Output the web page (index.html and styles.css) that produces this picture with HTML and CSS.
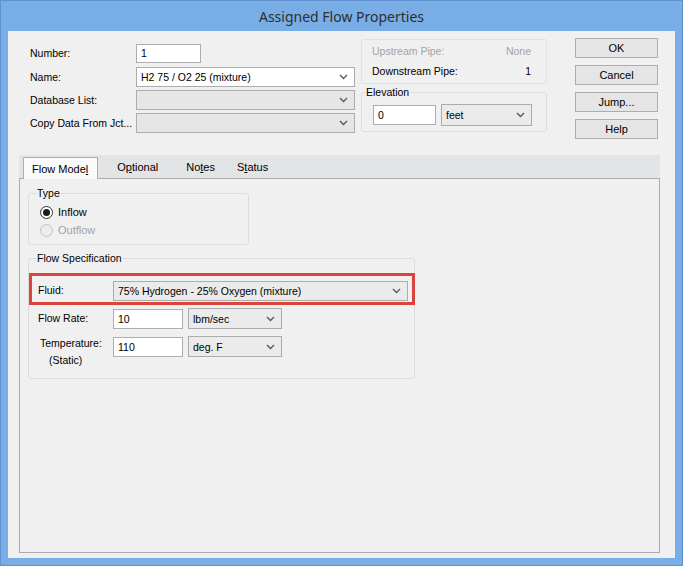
FILE: index.html
```html
<!DOCTYPE html>
<html lang="en">
<head>
  <meta charset="UTF-8" />
  <title>Assigned Flow Properties</title>
  <link rel="stylesheet" href="styles.css">
</head>
<body>
  <div class="window">
    <div class="titlebar">Assigned Flow Properties</div>

    <div class="client">
      <div class="top">
        <!-- Junction identity -->
        <div class="junction-form">
          <div class="row row-number">
            <label>Number:</label>
            <div class="textbox w-number">1</div>
          </div>
          <div class="row">
            <label>Name:</label>
            <div class="combo edit w-name">
              <span>H2 75 / O2 25 (mixture)</span>
              <svg class="arrow" width="9" height="6" viewBox="0 0 9 6"><polyline points="1,1 4.5,4.5 8,1" /></svg>
            </div>
          </div>
          <div class="row">
            <label>Database List:</label>
            <div class="combo w-name">
              <span></span>
              <svg class="arrow" width="9" height="6" viewBox="0 0 9 6"><polyline points="1,1 4.5,4.5 8,1" /></svg>
            </div>
          </div>
          <div class="row">
            <label>Copy Data From Jct...</label>
            <div class="combo w-name">
              <span></span>
              <svg class="arrow" width="9" height="6" viewBox="0 0 9 6"><polyline points="1,1 4.5,4.5 8,1" /></svg>
            </div>
          </div>
        </div>

        <!-- Connected pipes + elevation -->
        <div class="middle">
          <div class="pipes">
            <div class="pipe-row disabled"><span>Upstream Pipe:</span><span>None</span></div>
            <div class="pipe-row"><span>Downstream Pipe:</span><span>1</span></div>
          </div>
          <fieldset class="group elevation">
            <legend>Elevation</legend>
            <div class="field-line">
              <div class="textbox w-elev">0</div>
              <div class="combo list w-feet">
                <span>feet</span>
                <svg class="arrow" width="9" height="6" viewBox="0 0 9 6"><polyline points="1,1 4.5,4.5 8,1" /></svg>
              </div>
            </div>
          </fieldset>
        </div>

        <div class="buttons">
          <button>OK</button>
          <button>Cancel</button>
          <button>Jump...</button>
          <button>Help</button>
        </div>
      </div>

      <!-- Tabs -->
      <div class="tabs">
        <div class="tab-strip">
          <div class="tab selected">Flow Mode<u>l</u></div>
          <div class="tab t-optional">O<u>p</u>tional</div>
          <div class="tab t-notes">No<u>t</u>es</div>
          <div class="tab t-status">S<u>t</u>atus</div>
        </div>
        <div class="tab-panel">
          <fieldset class="group type-group">
            <legend>Type</legend>
            <div class="radios">
              <div class="radio-row">
                <span class="radio checked"></span><span>Inflow</span>
              </div>
              <div class="radio-row disabled">
                <span class="radio"></span><span>Outflow</span>
              </div>
            </div>
          </fieldset>

          <fieldset class="group spec-group">
            <legend>Flow Specification</legend>
            <div class="highlight">
              <label>Fluid:</label>
              <div class="combo list w-fluid">
                <span>75% Hydrogen - 25% Oxygen (mixture)</span>
                <svg class="arrow" width="9" height="6" viewBox="0 0 9 6"><polyline points="1,1 4.5,4.5 8,1" /></svg>
              </div>
            </div>
            <div class="spec-row">
              <label>Flow Rate:</label>
              <div class="textbox w-value">10</div>
              <div class="combo list w-unit">
                <span>lbm/sec</span>
                <svg class="arrow" width="9" height="6" viewBox="0 0 9 6"><polyline points="1,1 4.5,4.5 8,1" /></svg>
              </div>
            </div>
            <div class="spec-row">
              <label class="two-line">Temperature:<br><span class="sub">(Static)</span></label>
              <div class="textbox w-value">110</div>
              <div class="combo list w-unit">
                <span>deg. F</span>
                <svg class="arrow" width="9" height="6" viewBox="0 0 9 6"><polyline points="1,1 4.5,4.5 8,1" /></svg>
              </div>
            </div>
          </fieldset>
        </div>
      </div>
    </div>
  </div>
</body>
</html>
```

FILE: styles.css
```css
body {
  margin: 0;
  font-family: "Liberation Sans", Arial, sans-serif;
  font-size: 10.5px;
  color: #000;
}
.window {
  width: 683px;
  height: 566px;
  box-sizing: border-box;
  border: 1px solid #5d92cf;
  background-color: #78ade6;
  display: flex;
  flex-direction: column;
}
.titlebar {
  height: 30px;
  display: flex;
  align-items: center;
  justify-content: center;
  font-family: "Noto Sans", "Open Sans", sans-serif;
  font-size: 14px;
  color: #2f2f2f;
}
.client {
  margin: 0 7px 7px 7px;
  flex: 1;
  background-color: #f0f0f0;
}
.top {
  display: flex;
  height: 124px;
}

/* form controls */
.textbox,
.combo {
  box-sizing: border-box;
  height: 20px;
  border: 1px solid #abadb3;
  background: #fff;
  display: flex;
  align-items: center;
  padding: 0 4px;
  white-space: nowrap;
}
.textbox {
  height: 19px;
}
.combo {
  border-color: #acacac;
  background: #e6e6e6;
  padding-right: 6px;
}
.combo.edit {
  background: #fff;
}
.combo.list {
  background: #ebebeb;
}
.combo span {
  flex: 1;
  overflow: hidden;
}
.arrow polyline {
  fill: none;
  stroke: #5a5a5a;
  stroke-width: 1.4;
}
.group {
  margin: 0;
  padding: 0;
  border: 1px solid #dcdcdc;
  border-radius: 3px;
  min-width: 0;
}
.group legend {
  margin-left: 7px;
  padding: 0 1px;
  line-height: 13px;
}

/* top left form */
.junction-form {
  width: 325px;
  padding: 12px 0 0 22px;
  display: flex;
  flex-direction: column;
  gap: 3px;
}
.row {
  display: flex;
  align-items: center;
  height: 20px;
}
.row label {
  width: 106px;
  flex: none;
}
.row-number {
  margin-bottom: 1px;
}
.w-number { width: 65px; }
.w-name { width: 219px; }

/* middle column */
.middle {
  width: 186px;
  margin-left: 6px;
  padding-top: 8px;
}
.pipes {
  box-sizing: border-box;
  height: 45px;
  border: 1px solid #e2e2e2;
  border-radius: 2px;
  padding: 4px 15px 0 10px;
  display: flex;
  flex-direction: column;
  gap: 6px;
}
.pipe-row {
  display: flex;
  justify-content: space-between;
  line-height: 14px;
}
.pipe-row.disabled {
  color: #a3a3a3;
}
.elevation {
  margin-top: 2px;
  height: 46px;
  box-sizing: border-box;
}
.elevation legend {
  margin-left: 3px;
}
.field-line {
  display: flex;
  gap: 5px;
  align-items: center;
  padding: 5px 0 0 11px;
}
.w-elev { width: 63px; height: 20px; }
.w-feet { width: 91px; height: 22px; }

/* buttons */
.buttons {
  margin-left: 28px;
  padding-top: 7px;
  width: 83px;
  display: flex;
  flex-direction: column;
  gap: 7px;
}
.buttons button {
  height: 20px;
  padding: 0;
  border: 1px solid #adadad;
  background: #e5e5e5;
  font-family: inherit;
  font-size: 11px;
  color: #000;
}

/* tab control */
.tabs {
  margin-left: 11px;
  width: 641px;
  height: 398px;
  display: flex;
  flex-direction: column;
}
.tab-strip {
  height: 23px;
  background: #e2e4e6;
  display: flex;
  align-items: flex-end;
  padding-left: 4px;
}
.tab {
  height: 21px;
  line-height: 21px;
  padding: 0 9px;
  font-size: 11px;
  white-space: nowrap;
}
.tab.selected {
  box-sizing: border-box;
  height: 22px;
  line-height: 22px;
  margin-bottom: -1px;
  background: #fbfbfb;
  border: 1px solid #adadad;
  border-bottom: none;
  padding: 0 9px 0 8px;
  position: relative;
}
.t-optional { margin-left: 10px; }
.t-notes { margin-left: 10px; }
.t-status { margin-left: 4px; }
.tab-panel {
  flex: 1;
  border: 1px solid #adadad;
  border-bottom-color: #a3abb8;
  background: #f0f0f0;
  padding: 8px 0 0 8px;
}

/* type group */
.type-group {
  width: 221px;
  height: 58px;
  box-sizing: border-box;
}
.radios {
  padding: 3px 0 0 11px;
}
.radio-row {
  display: flex;
  align-items: center;
  height: 18px;
  gap: 5px;
  font-size: 11px;
}
.radio-row.disabled {
  color: #a3a3a3;
}
.radio {
  width: 13px;
  height: 13px;
  box-sizing: border-box;
  border: 1px solid #333;
  border-radius: 50%;
  background: #fff;
  display: flex;
  align-items: center;
  justify-content: center;
}
.radio.checked::after {
  content: "";
  width: 7px;
  height: 7px;
  border-radius: 50%;
  background: #1b1b1b;
}
.radio-row.disabled .radio {
  border-color: #c4c4c4;
  background: #ececec;
}

/* flow specification group */
.spec-group {
  margin-top: 7px;
  width: 387px;
  height: 127px;
  box-sizing: border-box;
}
.highlight {
  box-sizing: border-box;
  width: 386px;
  height: 32px;
  margin-top: 8px;
  border: 3px solid #d9453d;
  display: flex;
  align-items: flex-start;
  padding: 5px 0 0 6px;
}
.highlight label {
  width: 75px;
  line-height: 19px;
}
.w-fluid { width: 295px; }
.spec-row {
  display: flex;
  align-items: flex-start;
  gap: 5px;
  margin-top: 4px;
  padding-left: 9px;
}
.spec-row + .spec-row {
  margin-top: 8px;
}
.spec-row label {
  width: 70px;
  line-height: 19px;
}
.spec-row label.two-line {
  line-height: 17px;
  margin-top: -2px;
  padding-left: 2px;
  width: 68px;
}
.spec-row .sub {
  padding-left: 9px;
}
.w-value { width: 70px; height: 20px; }
.w-unit { width: 94px; height: 21px; margin-top: -1px; }
```
